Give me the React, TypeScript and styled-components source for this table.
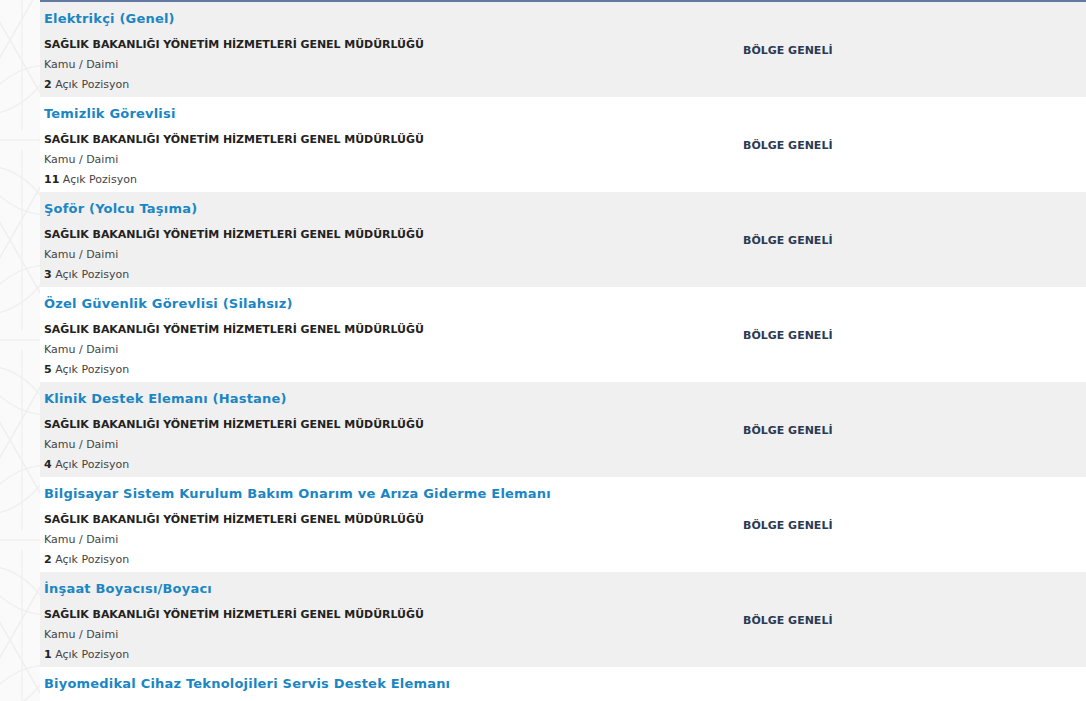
import { createGlobalStyle, styled } from 'styled-components';

const GlobalStyle = createGlobalStyle`
  html, body {
    margin: 0;
    padding: 0;
    background: #ffffff;
    overflow: hidden;
  }
  body {
    font-family: 'DejaVu Sans', Verdana, sans-serif;
  }
`;

const Page = styled.div`
  display: flex;
  width: 1086px;
  height: 701px;
  overflow: hidden;
`;

const Side = styled.div`
  width: 40px;
  flex-shrink: 0;
  background-color: #fafafa;
  svg {
    display: block;
  }
`;

const Main = styled.div`
  flex: 1;
  border-top: 2px solid #6179a0;
`;

const Row = styled.div<{ $alt: boolean }>`
  display: grid;
  grid-template-columns: 699px 1fr;
  height: 95px;
  background-color: ${(props) => (props.$alt ? '#f0f0f0' : '#ffffff')};
`;

const Info = styled.div`
  padding: 7px 0 0 4px;
  display: flex;
  flex-direction: column;
`;

const Title = styled.a`
  font-size: 13px;
  font-weight: 700;
  line-height: 20px;
  letter-spacing: 0.2px;
  color: #1a86c4;
  text-decoration: none;
  margin-bottom: 6px;
  white-space: nowrap;
`;

const Org = styled.div`
  font-size: 11px;
  font-weight: 700;
  line-height: 20px;
  letter-spacing: -0.05px;
  color: #222222;
  white-space: nowrap;
`;

const Line = styled.div`
  font-size: 11px;
  line-height: 20px;
  color: #444444;
  b {
    color: #222222;
  }
`;

const Region = styled.div`
  display: flex;
  align-items: center;
  padding: 2px 0 0 4px;
  font-size: 11px;
  font-weight: 700;
  color: #2b3a55;
`;

interface IJob {
  title: string;
  count: number;
}

const jobs: IJob[] = [
  { title: 'Elektrikçi (Genel)', count: 2 },
  { title: 'Temizlik Görevlisi', count: 11 },
  { title: 'Şoför (Yolcu Taşıma)', count: 3 },
  { title: 'Özel Güvenlik Görevlisi (Silahsız)', count: 5 },
  { title: 'Klinik Destek Elemanı (Hastane)', count: 4 },
  { title: 'Bilgisayar Sistem Kurulum Bakım Onarım ve Arıza Giderme Elemanı', count: 2 },
  { title: 'İnşaat Boyacısı/Boyacı', count: 1 },
  { title: 'Biyomedikal Cihaz Teknolojileri Servis Destek Elemanı', count: 3 },
];

function Pattern() {
  const tiles = [0, 1, 2, 3];
  return (
    <svg width="40" height="701" viewBox="0 0 40 701">
      <g fill="none" stroke="#efefef" strokeWidth="1.4">
        {tiles.map((i) => {
          const cy = 40 + i * 200;
          return (
            <g key={i}>
              <circle cx="-20" cy={cy} r="75" />
              <circle cx="50" cy={cy + 100} r="75" />
              <line x1="-30" y1={cy - 70} x2="50" y2={cy + 70} />
              <line x1="50" y1={cy - 70} x2="-30" y2={cy + 70} />
              <line x1="22" y1={cy - 90} x2="22" y2={cy + 90} />
              <line x1="-20" y1={cy + 100} x2="60" y2={cy + 100} />
            </g>
          );
        })}
      </g>
    </svg>
  );
}

export default function App() {
  return (
    <>
      <GlobalStyle />
      <Page>
        <Side>
          <Pattern />
        </Side>
        <Main>
          {jobs.map((job, index) => (
            <Row key={job.title} $alt={index % 2 === 0}>
              <Info>
                <Title href="#">{job.title}</Title>
                <Org>SAĞLIK BAKANLIĞI YÖNETİM HİZMETLERİ GENEL MÜDÜRLÜĞÜ</Org>
                <Line>Kamu / Daimi</Line>
                <Line>
                  <b>{job.count}</b> Açık Pozisyon
                </Line>
              </Info>
              <Region>BÖLGE GENELİ</Region>
            </Row>
          ))}
        </Main>
      </Page>
    </>
  );
}
